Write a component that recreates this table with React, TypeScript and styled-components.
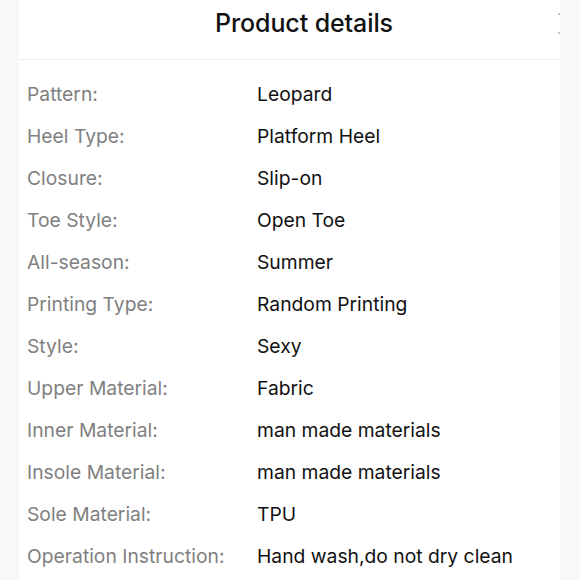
import React from "react";
import styled, { createGlobalStyle } from "styled-components";

const Global = createGlobalStyle`
  html, body { margin: 0; padding: 0; background: #f9f9f9; }
  body { font-family: Inter, "Noto Sans", sans-serif; -webkit-font-smoothing: antialiased; }
`;

const Page = styled.div`
  width: 580px;
  height: 580px;
  display: grid;
  grid-template-columns: 19px 1fr 20px;
  background: #f9f9f9;
  overflow: hidden;
`;

const Side = styled.div`
  background: #f8f8f8;
  position: relative;
`;

const Dot = styled.span<{ $top: number }>`
  position: absolute;
  left: -2px;
  top: ${(p) => p.$top}px;
  width: 2px;
  height: 2px;
  background: #c4c4c4;
`;

const Panel = styled.div`
  background: #ffffff;
  display: flex;
  flex-direction: column;
`;

const Header = styled.div`
  height: 59px;
  display: flex;
  align-items: center;
  justify-content: center;
  border-bottom: 1px solid #ececec;
  padding-left: 29px;
  box-sizing: content-box;
`;

const Title = styled.h1`
  margin: 0;
  font-size: 25px;
  font-weight: 500;
  color: #111;
  letter-spacing: -0.1px;
  margin-top: -14px;
`;

const List = styled.div`
  padding-top: 13px;
  display: flex;
  flex-direction: column;
`;

const Row = styled.div`
  height: 42px;
  display: grid;
  grid-template-columns: 230px 1fr;
  align-items: center;
  padding-left: 8px;
  font-size: 19.3px;
`;

const Label = styled.span`
  color: #808080;
  font-weight: 400;
`;

const Value = styled.span`
  color: #111;
`;

const rows: [string, string][] = [
  ["Pattern:", "Leopard"],
  ["Heel Type:", "Platform Heel"],
  ["Closure:", "Slip-on"],
  ["Toe Style:", "Open Toe"],
  ["All-season:", "Summer"],
  ["Printing Type:", "Random Printing"],
  ["Style:", "Sexy"],
  ["Upper Material:", "Fabric"],
  ["Inner Material:", "man made materials"],
  ["Insole Material:", "man made materials"],
  ["Sole Material:", "TPU"],
  ["Operation Instruction:", "Hand wash,do not dry clean"],
];

export default function App() {
  return (
    <>
      <Global />
      <Page>
        <Side />
        <Panel>
          <Header>
            <Title>Product details</Title>
          </Header>
          <List>
            {rows.map(([l, v]) => (
              <Row key={l}>
                <Label>{l}</Label>
                <Value>{v}</Value>
              </Row>
            ))}
          </List>
        </Panel>
        <Side>
          <Dot $top={13} />
          <Dot $top={32} />
        </Side>
      </Page>
    </>
  );
}
